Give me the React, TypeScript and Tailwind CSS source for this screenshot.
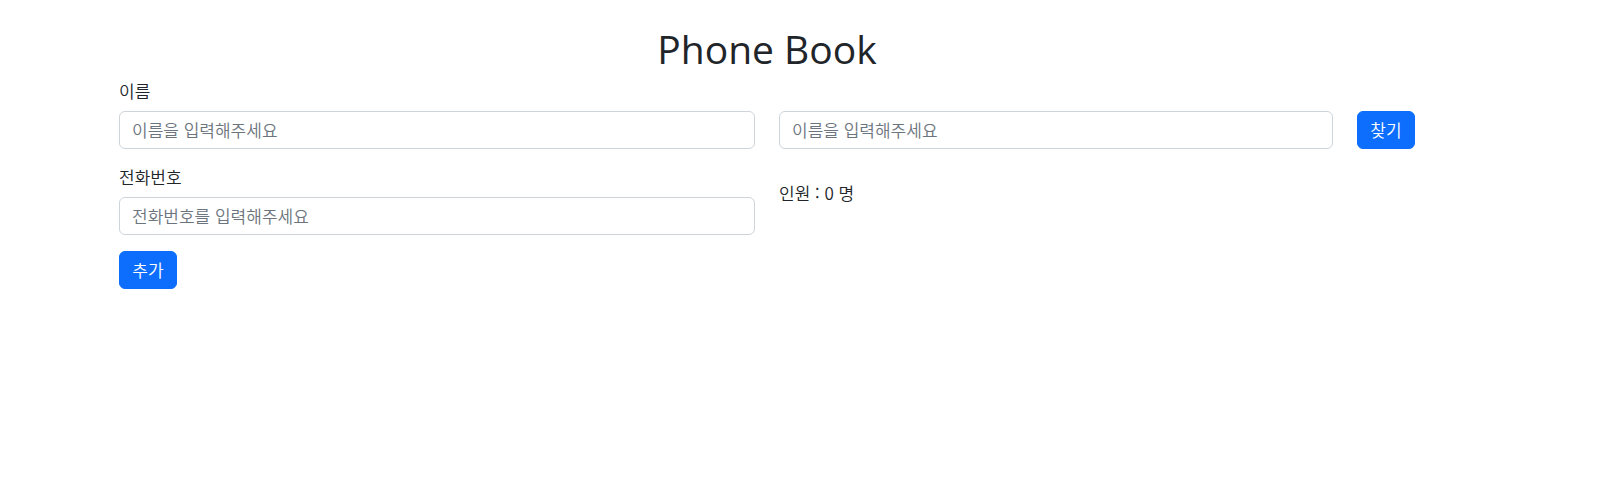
import { useState, type FormEvent } from "react";

type Contact = { name: string; phone: string };

const field =
  "block w-full rounded-md border border-[#ced4da] bg-white px-3 py-1.5 leading-6 text-[#212529] placeholder:text-[#6c757d] placeholder:opacity-100 focus:border-[#86b7fe] focus:outline-none";
const button =
  "min-w-[58px] rounded-md border border-[#0d6efd] bg-[#0d6efd] px-3 py-1.5 leading-6 text-white hover:bg-[#0b5ed7]";

export default function App() {
  const [contacts, setContacts] = useState<Contact[]>([]);
  const [name, setName] = useState("");
  const [phone, setPhone] = useState("");
  const [keyword, setKeyword] = useState("");
  const [query, setQuery] = useState("");

  const shown = contacts.filter((c) => c.name.includes(query));

  function add(event: FormEvent) {
    event.preventDefault();
    if (!name) return;
    setContacts([...contacts, { name, phone }]);
    setName("");
    setPhone("");
  }

  function search(event: FormEvent) {
    event.preventDefault();
    setQuery(keyword);
  }

  return (
    <div lang="ko" className="pt-[25px] lg:pr-[74px] font-['Noto_Sans_CJK_KR',sans-serif] text-[17px] leading-6 font-[350] text-[#212529]">
      <main className="mx-auto max-w-[1320px] px-3">
        <h1 className="mb-[6px] text-center font-['Open_Sans',sans-serif] text-[39px] leading-[48px] font-normal">Phone Book</h1>
        <div className="grid gap-6 md:grid-cols-2">
          <form onSubmit={add}>
            <div className="mb-4">
              <label htmlFor="name" className="mb-2 block">이름</label>
              <input id="name" type="text" className={field} placeholder="이름을 입력해주세요" value={name} onChange={(e) => setName(e.target.value)} />
            </div>
            <div className="mb-4">
              <label htmlFor="phone" className="mb-2 block">전화번호</label>
              <input id="phone" type="text" className={field} placeholder="전화번호를 입력해주세요" value={phone} onChange={(e) => setPhone(e.target.value)} />
            </div>
            <button type="submit" className={button}>추가</button>
          </form>
          <div className="pt-8">
            <form onSubmit={search} className="flex gap-6">
              <input type="text" aria-label="이름" className={field} placeholder="이름을 입력해주세요" value={keyword} onChange={(e) => setKeyword(e.target.value)} />
              <button type="submit" className={`shrink-0 ${button}`}>찾기</button>
            </form>
            <p className="mt-8">인원 : {shown.length} 명</p>
            <ul>
              {shown.map((c, i) => (
                <li key={i} className="border-b border-[#ced4da] py-2">
                  {c.name} {c.phone}
                </li>
              ))}
            </ul>
          </div>
        </div>
      </main>
    </div>
  );
}
